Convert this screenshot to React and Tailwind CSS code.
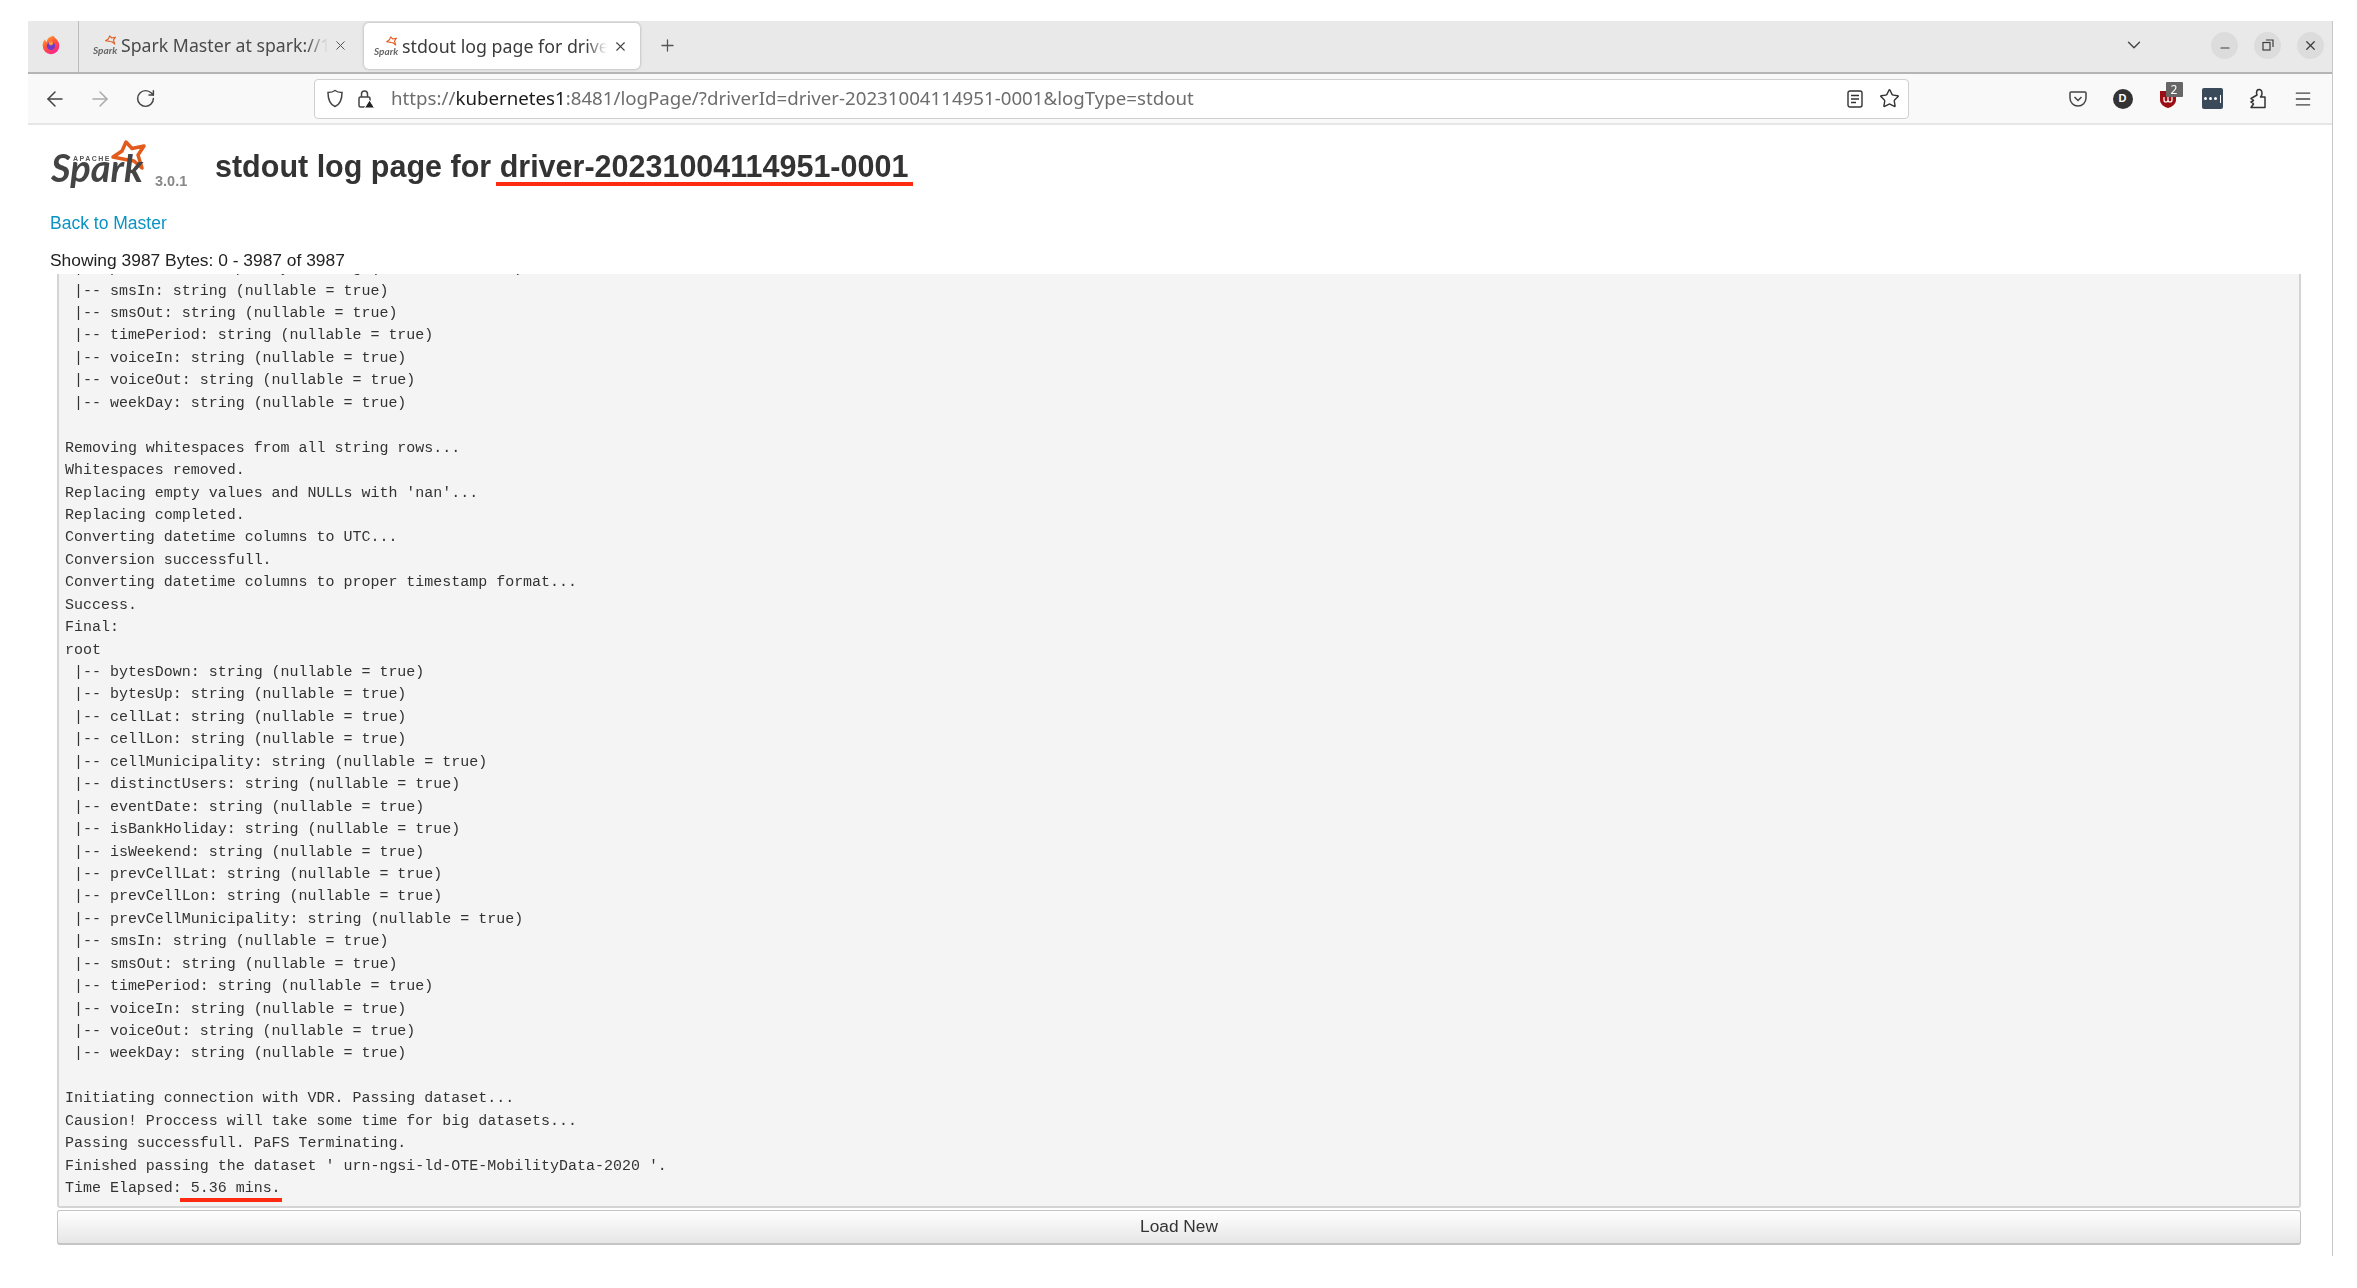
import { ArrowLeft, ArrowRight, ChevronDown, Menu, Minus, Plus, RotateCw, Star, X } from 'lucide-react';

const schema = [
  'bytesDown', 'bytesUp', 'cellLat', 'cellLon', 'cellMunicipality', 'distinctUsers', 'eventDate',
  'isBankHoliday', 'isWeekend', 'prevCellLat', 'prevCellLon', 'prevCellMunicipality', 'smsIn',
  'smsOut', 'timePeriod', 'voiceIn', 'voiceOut', 'weekDay',
].map((name) => ` |-- ${name}: string (nullable = true)`);

const logLines = [
  ' |-- prevCellMunicipality: string (nullable = true)',
  ' |-- smsIn: string (nullable = true)',
  ' |-- smsOut: string (nullable = true)',
  ' |-- timePeriod: string (nullable = true)',
  ' |-- voiceIn: string (nullable = true)',
  ' |-- voiceOut: string (nullable = true)',
  ' |-- weekDay: string (nullable = true)',
  '',
  'Removing whitespaces from all string rows...',
  'Whitespaces removed.',
  "Replacing empty values and NULLs with 'nan'...",
  'Replacing completed.',
  'Converting datetime columns to UTC...',
  'Conversion successfull.',
  'Converting datetime columns to proper timestamp format...',
  'Success.',
  'Final:',
  'root',
  ...schema,
  '',
  'Initiating connection with VDR. Passing dataset...',
  'Causion! Proccess will take some time for big datasets...',
  'Passing successfull. PaFS Terminating.',
  "Finished passing the dataset ' urn-ngsi-ld-OTE-MobilityData-2020 '.",
];

function SparkStar({ className }) {
  return (
    <svg viewBox="0 0 35 30" className={className}>
      <path
        d="M15 2 L21 8.500 L33 6 L27 15 L31 28 L23 21 L17 20 L2 17 L11 11 Z"
        fill="none"
        stroke="#e25a1c"
        strokeWidth="3.500"
        strokeLinejoin="round"
      />
    </svg>
  );
}

function TabFavicon() {
  return (
    <span className="relative w-[22px] h-[20px] shrink-0">
      <span className="absolute left-0 bottom-0 text-[10px] leading-none font-bold italic text-[#666] font-['Lato',sans-serif]">
        Spark
      </span>
      <SparkStar className="absolute right-[-1px] top-0 w-[11px] h-[10px]" />
    </span>
  );
}

function Firefox() {
  return (
    <svg viewBox="0 0 24 24" className="w-[20px] h-[20px]">
      <defs>
        <linearGradient id="ff" x1="0" y1="0" x2="0.6" y2="1">
          <stop offset="0" stopColor="#ffbd2e" />
          <stop offset="0.5" stopColor="#ff5a36" />
          <stop offset="1" stopColor="#f7268a" />
        </linearGradient>
      </defs>
      <path d="M15 1c1 3 7 5 7 12a10 10 0 0 1-20 0c0-4 1-6 3-8 0 2 1 3 2 3 0-3 3-6 8-7z" fill="url(#ff)" />
      <circle cx="12" cy="13" r="5" fill="#6f3bc9" />
      <circle cx="12" cy="10" r="2.500" fill="#ff9a3c" />
    </svg>
  );
}

function WindowButton({ children }) {
  return (
    <span className="w-[27px] h-[27px] rounded-full bg-[#dcdcdc] flex items-center justify-center text-[#3d3d3d]">
      {children}
    </span>
  );
}

function TabBar() {
  return (
    <div className="h-[53px] bg-[#e9e9e9] border-b-2 border-[#b5b5b5] flex items-stretch">
      <div className="w-[51px] border-r border-[#bdbdbd] flex items-center justify-center pb-[3px] pr-[4px]">
        <Firefox />
      </div>
      <div className="w-[285px] flex items-center gap-[6px] pl-[14px] pb-[3px]">
        <TabFavicon />
        <span className="w-[207px] overflow-hidden whitespace-nowrap text-[17.700px] text-[#4a4a4a] font-['Noto_Sans',sans-serif] [mask-image:linear-gradient(to_right,black_90%,transparent)]">
          Spark Master at spark://1
        </span>
        <X className="w-[15px] h-[15px] text-[#555] shrink-0 ml-[-1px]" strokeWidth={1.6} />
      </div>
      <div className="w-[276px] h-[46px] mt-[2px] bg-white rounded-[5px] shadow-[0_0_3px_rgba(0,0,0,0.3)] flex items-center gap-[6px] pl-[10px]">
        <TabFavicon />
        <span className="w-[205px] overflow-hidden whitespace-nowrap text-[17.800px] text-[#3a3a3a] font-['Noto_Sans',sans-serif] [mask-image:linear-gradient(to_right,black_90%,transparent)]">
          stdout log page for driver
        </span>
        <X className="w-[15px] h-[15px] text-[#444] shrink-0" strokeWidth={1.8} />
      </div>
      <div className="w-[54px] flex items-center justify-center pb-[3px]">
        <Plus className="w-[19px] h-[19px] text-[#555]" strokeWidth={1.6} />
      </div>
      <div className="flex-1 flex items-center justify-end pb-[3px] pr-[8px]">
        <ChevronDown className="w-[22px] h-[22px] text-[#444] mr-[66px]" strokeWidth={1.5} />
        <div className="flex items-center gap-[16px]">
          <WindowButton>
            <Minus className="w-[14px] h-[14px] mt-[5px]" strokeWidth={1.8} />
          </WindowButton>
          <WindowButton>
            <svg viewBox="0 0 12 12" className="w-[12px] h-[12px]" fill="none" stroke="currentColor" strokeWidth="1.2">
              <rect x="1" y="3.500" width="7" height="7.500" />
              <path d="M4 1h7v7" />
            </svg>
          </WindowButton>
          <WindowButton>
            <X className="w-[15px] h-[15px]" strokeWidth={2} />
          </WindowButton>
        </div>
      </div>
    </div>
  );
}

function ToolSlot({ children }) {
  return <span className="w-[45px] flex items-center justify-center">{children}</span>;
}

function Toolbar() {
  return (
    <div className="h-[51px] bg-[#f9f9f9] border-b-2 border-[#e6e6e6] flex items-center">
      <div className="w-[286px] flex items-center pl-[15px] gap-[21px] text-[#444]">
        <ArrowLeft className="w-[24px] h-[24px]" strokeWidth={1.5} />
        <ArrowRight className="w-[24px] h-[24px] text-[#aaa]" strokeWidth={1.5} />
        <RotateCw className="w-[21px] h-[21px] ml-[2px]" strokeWidth={1.7} />
      </div>
      <div className="w-[1595px] h-[40px] bg-white border border-[#cfcfcf] rounded-[4px] flex items-center pl-[12px] pr-[8px]">
        <svg viewBox="0 0 16 18" className="w-[16px] h-[19px] shrink-0" fill="none" stroke="#444" strokeWidth="1.500">
          <path d="M8 1c2 1.500 4 2 7 2 0 7-2 12-7 14C3 15 1 10 1 3c3 0 5-.5 7-2z" />
        </svg>
        <svg viewBox="0 0 18 20" className="w-[18px] h-[20px] shrink-0 ml-[14px]" fill="none" stroke="#444" strokeWidth="1.500">
          <rect x="2" y="8" width="11" height="10" rx="1.500" />
          <path d="M4.500 8V5a3 3 0 0 1 6 0v3" />
          <path d="M12.500 11l5 8h-10z" fill="#222" stroke="#fff" strokeWidth="1" />
        </svg>
        <span className="ml-[16px] text-[18.700px] whitespace-nowrap text-[#6d6d6d] font-['Noto_Sans',sans-serif]">
          https://<span className="text-[#1a1a1a]">kubernetes1</span>:8481/logPage/?driverId=driver-20231004114951-0001&amp;logType=stdout
        </span>
        <svg viewBox="0 0 16 18" className="w-[16px] h-[18px] ml-auto shrink-0" fill="none" stroke="#333" strokeWidth="1.400">
          <rect x="1" y="1" width="14" height="16" rx="2" />
          <path d="M4 5.500h8M4 9h8M4 12.500h5" />
        </svg>
        <Star className="w-[21px] h-[21px] ml-[16px] text-[#333] shrink-0" strokeWidth={1.6} />
      </div>
      <div className="flex-1 flex items-center pl-[146px]">
        <ToolSlot>
          <svg viewBox="0 0 18 18" className="w-[18px] h-[18px]" fill="none" stroke="#444" strokeWidth="1.500">
            <path d="M2 2h14a1 1 0 0 1 1 1v5a8 8 0 0 1-16 0V3a1 1 0 0 1 1-1z" />
            <path d="M5.500 7L9 10.500 12.500 7" />
          </svg>
        </ToolSlot>
        <ToolSlot>
          <span className="w-[20px] h-[20px] rounded-full bg-[#333] text-white text-[11px] font-bold leading-none flex items-center justify-center font-['Liberation_Sans',sans-serif]">
            D
          </span>
        </ToolSlot>
        <ToolSlot>
          <span className="relative">
            <svg viewBox="0 0 18 20" className="w-[18px] h-[20px] block">
              <path d="M1 2h16v9c0 4-4 7-8 8-4-1-8-4-8-8z" fill="#9b0f14" />
              <path d="M5 8v3a2 2 0 0 0 4 0V8m0 3a2 2 0 0 0 4 0V8" fill="none" stroke="#fff" strokeWidth="1.200" />
            </svg>
            <span className="absolute left-[7px] top-[-7px] w-[17px] h-[15px] bg-[#666] rounded-[1px] text-white text-[12px] leading-[15px] text-center font-['Noto_Sans',sans-serif]">
              2
            </span>
          </span>
        </ToolSlot>
        <ToolSlot>
          <span className="w-[21px] h-[21px] bg-[#3b4a5a] rounded-[2px] flex items-center justify-center gap-[2px]">
            <span className="w-[3px] h-[3px] rounded-full bg-white" />
            <span className="w-[3px] h-[3px] rounded-full bg-white" />
            <span className="w-[3px] h-[3px] rounded-full bg-white" />
            <span className="w-[1px] h-[8px] ml-[1px] bg-white" />
          </span>
        </ToolSlot>
        <ToolSlot>
          <svg viewBox="0 0 18 21" className="w-[18px] h-[21px]" fill="none" stroke="#333" strokeWidth="1.500" strokeLinejoin="round">
            <path d="M2 19.500h14V9h-4.500c1-1 1.500-2 1.500-3.500C13 3 11.500 1.500 10 1.500S7.500 3 7.500 5l.5 2-6 3.500c1 .5 2 1 2.500 2L2 14c1 .5 2 1 2.500 2z" />
          </svg>
        </ToolSlot>
        <ToolSlot>
          <Menu className="w-[20px] h-[20px] text-[#444]" strokeWidth={1.6} />
        </ToolSlot>
      </div>
    </div>
  );
}

function PageHeader() {
  return (
    <div className="h-[86px] flex items-start pl-[22px] pt-[13px]">
      <div className="relative w-[105px] h-[52px] shrink-0">
        <SparkStar className="absolute left-[61px] top-[2px] w-[35px] h-[30px]" />
        <span className="absolute left-[1px] top-[10px] text-[38px] leading-[38px] italic font-bold text-[#444] font-['Lato',sans-serif]">
          Spark
        </span>
        <span className="absolute left-[23px] top-[17px] text-[7px] leading-none font-bold tracking-[1.500px] text-[#555] font-['Liberation_Sans',sans-serif]">
          APACHE
        </span>
      </div>
      <span className="mt-[36px] w-[60px] shrink-0 text-[14.500px] leading-none font-bold text-[#888] font-['Liberation_Sans',sans-serif]">
        3.0.1
      </span>
      <h1 className="relative mt-[10px] text-[30.500px] leading-[36px] font-bold text-[#333] whitespace-nowrap font-['Liberation_Sans',sans-serif]">
        stdout log page for driver-20231004114951-0001
        <span className="absolute left-[281px] top-[34px] w-[417px] h-[4px] bg-[#ff2a12]" />
      </h1>
    </div>
  );
}

function LogPanel() {
  return (
    <pre className="h-[934px] ml-[29px] mr-[31px] bg-[#f4f4f4] border-x-2 border-b-2 border-[#d4d4d4] rounded-b-[3px] pl-[6px] pr-[8px] pb-[6.500px] overflow-hidden flex flex-col justify-end text-[14.970px] leading-[22.450px] text-[#333] font-['Liberation_Mono',monospace]">
      {logLines.map((line, i) => (
        <div key={i} className="h-[22.450px] shrink-0">{line}</div>
      ))}
      <div className="h-[22.450px] shrink-0">
        Time Elapsed:<span className="relative"> 5.36 mins.<span className="absolute left-[-2px] top-[18px] w-[102px] h-[4px] bg-[#ff2a12]" /></span>
      </div>
    </pre>
  );
}

export default function App() {
  return (
    <div className="w-[2357px] h-[1288px] bg-white pt-[21px] pl-[28px] overflow-hidden font-['Liberation_Sans',sans-serif]">
      <div className="w-[2305px] h-[1235px] border-r border-[#c8c8c8] blur-[0.350px]">
        <TabBar />
        <Toolbar />
        <PageHeader />
        <a className="block ml-[22px] h-[25px] text-[17.500px] leading-[25px] text-[#0a93c4]">Back to Master</a>
        <div className="ml-[22px] mt-[12px] h-[25px] text-[17.400px] leading-[25px] text-[#222]">
          Showing 3987 Bytes: 0 - 3987 of 3987
        </div>
        <div className="h-px" />
        <LogPanel />
        <button className="block mt-[2px] ml-[29px] w-[2244px] h-[35px] rounded-[3px] border border-b-2 border-[#c4c4c4] bg-gradient-to-b from-white to-[#e6e6e6] text-[17.300px] text-[#333] font-['Liberation_Sans',sans-serif]">
          Load New
        </button>
      </div>
    </div>
  );
}
